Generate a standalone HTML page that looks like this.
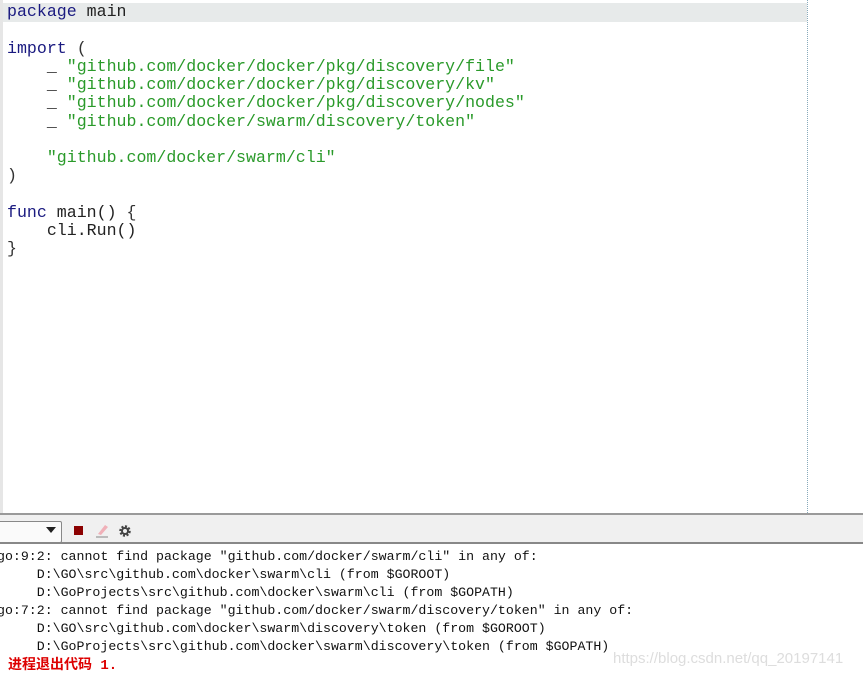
<!DOCTYPE html>
<html><head><meta charset="utf-8"><style>
body{margin:0;width:863px;height:677px;overflow:hidden;background:#fff;position:relative;font-family:"Liberation Mono",monospace}
.ed{position:absolute;left:0;top:0;width:863px;height:513px;background:#fff;border-left:3px solid #e6e6e6;box-sizing:border-box}
.hl{position:absolute;left:3px;top:3px;width:804px;height:19px;background:#e7eaea}
.vl{position:absolute;left:807px;top:0;height:513px;border-left:1px dotted #8ab}
.code{position:absolute;left:7px;top:3px;font-size:16.6px;line-height:18.25px;white-space:pre;color:#222}
.k{color:#1a1a80}.s{color:#2a9a2a}.p{color:#333}
.tb{position:absolute;left:0;top:513px;width:863px;height:31px;background:#f0f0f0;border-top:2px solid #9a9a9a;border-bottom:2px solid #888;box-sizing:border-box}
.sel{position:absolute;left:-4px;top:6px;width:64px;height:20px;border:1px solid #888;border-radius:2px;background:#fafafa}
.out{position:absolute;left:-3px;top:548px;font-size:13.25px;line-height:18px;white-space:pre;color:#111}
.red{position:absolute;left:8px;top:654px;color:#d00;font-weight:bold;font-size:14px;font-family:"Liberation Mono","Noto Sans CJK SC",monospace}
.wm{position:absolute;left:613px;top:650px;color:#ddd;font-family:"Liberation Sans",sans-serif;font-size:15px}
</style></head><body>
<div class="ed"></div>
<div class="hl"></div>
<div class="vl"></div>
<div class="code"><span class="k">package</span> main

<span class="k">import</span> <span class="p">(</span>
    _ <span class="s">"github.com/docker/docker/pkg/discovery/file"</span>
    _ <span class="s">"github.com/docker/docker/pkg/discovery/kv"</span>
    _ <span class="s">"github.com/docker/docker/pkg/discovery/nodes"</span>
    _ <span class="s">"github.com/docker/swarm/discovery/token"</span>

    <span class="s">"github.com/docker/swarm/cli"</span>
<span class="p">)</span>

<span class="k">func</span> main() <span class="p">{</span>
    cli.Run()
<span class="p">}</span></div>
<div class="tb"><div class="sel"><span style="position:absolute;left:49px;top:5px;border-left:5px solid transparent;border-right:5px solid transparent;border-top:6px solid #222"></span></div>
<div style="position:absolute;left:74px;top:11px;width:9px;height:9px;background:#8b0000"></div>
<svg style="position:absolute;left:95px;top:7px" width="14" height="17"><path d="M3 12 L10 3 L13 5 L6 13Z" fill="#f0b0b8"/><rect x="1" y="14" width="12" height="2" fill="#bbb"/></svg>
<svg style="position:absolute;left:118px;top:9px" width="14" height="14" viewBox="0 0 14 14"><circle cx="7" cy="7" r="4.5" fill="none" stroke="#444" stroke-width="2.5" stroke-dasharray="2 1.5"/><circle cx="7" cy="7" r="3" fill="none" stroke="#444" stroke-width="2"/></svg>
</div>
<div class="out">go:9:2: cannot find package "github.com/docker/swarm/cli" in any of:
     D:\GO\src\github.com\docker\swarm\cli (from $GOROOT)
     D:\GoProjects\src\github.com\docker\swarm\cli (from $GOPATH)
go:7:2: cannot find package "github.com/docker/swarm/discovery/token" in any of:
     D:\GO\src\github.com\docker\swarm\discovery\token (from $GOROOT)
     D:\GoProjects\src\github.com\docker\swarm\discovery\token (from $GOPATH)</div>
<div class="red">进程退出代码 1.</div>
<div class="wm">https://blog.csdn.net/qq_20197141</div>
</body></html>
